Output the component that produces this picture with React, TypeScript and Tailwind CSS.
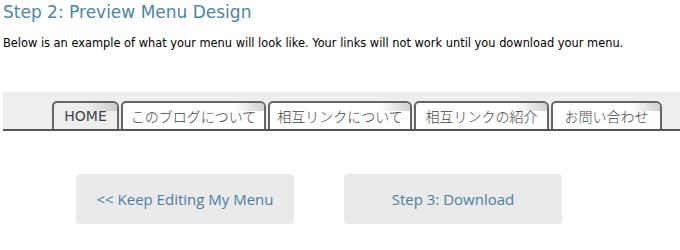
import React from "react";

const tabs = [
  { label: "HOME", w: 67, active: true },
  { label: "このブログについて", w: 145 },
  { label: "相互リンクについて", w: 144 },
  { label: "相互リンクの紹介", w: 135 },
  { label: "お問い合わせ", w: 111 },
];

export default function App() {
  return (
    <div className="w-[680px] h-[250px] bg-white overflow-hidden" style={{ fontFamily: '"DejaVu Sans", "Noto Sans CJK JP", sans-serif' }}>
      <div className="pl-[3px] pt-[1px] text-[17px] leading-[22px] text-[#4a86a8]">Step 2: Preview Menu Design</div>
      <div className="pl-[3px] mt-[13px] text-[11.4px] leading-[14px] text-black">
        Below is an example of what your menu will look like. Your links will not work until you download your menu.
      </div>
      <div className="mt-[42px] ml-[3px] h-[39px] bg-[#eeeeee] border-b-2 border-[#555] flex items-end pl-[49px] gap-[2px]">
        {tabs.map((t) => (
          <div
            key={t.label}
            className={`relative h-[28px] border-2 border-b-0 border-[#666] rounded-tl-[5px] rounded-tr-[6px] flex items-center justify-center text-[14px] text-[#444] ${t.active ? "bg-[#eeeeee]" : "bg-white font-light"}`}
            style={{ width: t.w, fontFamily: t.active ? '"DejaVu Sans", sans-serif' : '"Noto Sans CJK JP", sans-serif' }}
          >
            <div className="absolute right-0 top-0 w-[30px] h-[8px] bg-gradient-to-l from-[#bbb] to-transparent rounded-tr-[5px] opacity-70" />
            <span className="relative">{t.label}</span>
          </div>
        ))}
      </div>
      <div className="flex mt-[43px] pl-[76px] gap-[50px]" style={{ fontFamily: '"Open Sans", sans-serif' }}>
        <div className="w-[218px] h-[50px] bg-[#eaeaea] rounded-[4px] flex items-center justify-center text-[15px] text-[#4a7fa3]">
          &lt;&lt; Keep Editing My Menu
        </div>
        <div className="w-[218px] h-[50px] bg-[#eaeaea] rounded-[4px] flex items-center justify-center text-[15px] text-[#4a7fa3]">
          Step 3: Download
        </div>
      </div>
    </div>
  );
}
